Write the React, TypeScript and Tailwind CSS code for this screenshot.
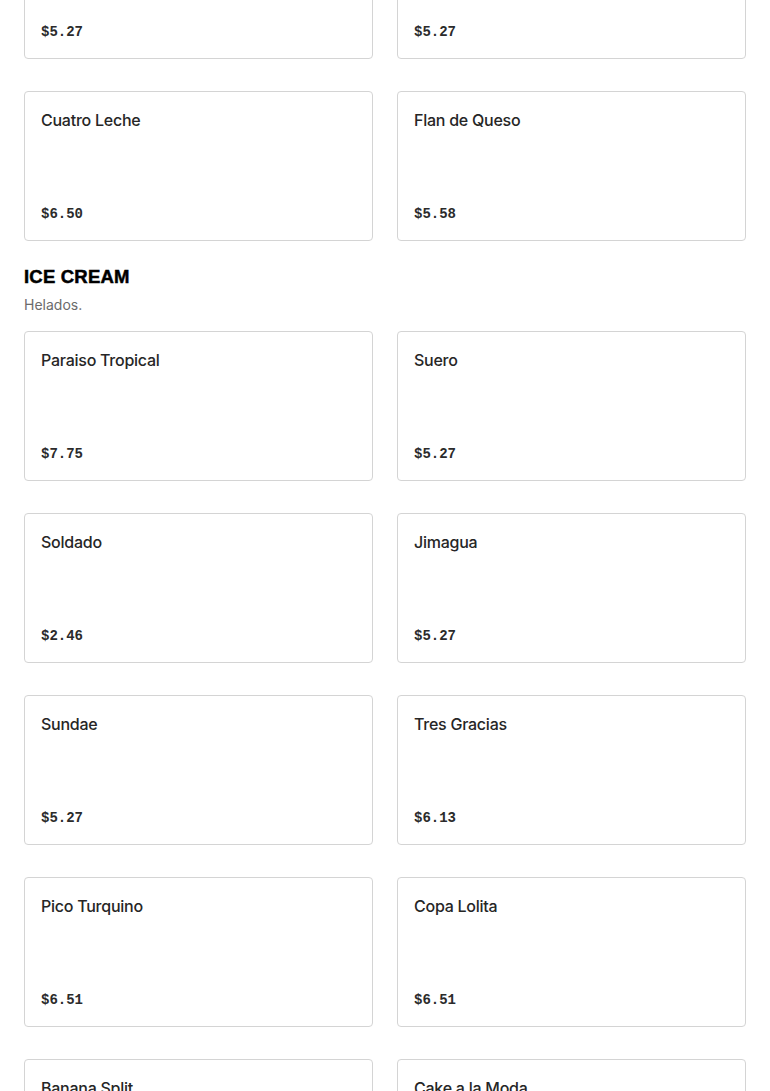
const rows: [string, string][][] = [
  [
    ["Tres Leches", "$5.27"],
    ["Flan", "$5.27"],
  ],
  [
    ["Cuatro Leche", "$6.50"],
    ["Flan de Queso", "$5.58"],
  ],
];

const iceCream: [string, string][][] = [
  [
    ["Paraiso Tropical", "$7.75"],
    ["Suero", "$5.27"],
  ],
  [
    ["Soldado", "$2.46"],
    ["Jimagua", "$5.27"],
  ],
  [
    ["Sundae", "$5.27"],
    ["Tres Gracias", "$6.13"],
  ],
  [
    ["Pico Turquino", "$6.51"],
    ["Copa Lolita", "$6.51"],
  ],
  [
    ["Banana Split", "$6.51"],
    ["Cake a la Moda", "$6.51"],
  ],
];

function ItemCard({ name, price }: { name: string; price: string }) {
  return (
    <div className="flex h-[150px] flex-col rounded-[4px] border border-[#d4d4d4] bg-white p-4">
      <h3 className="font-['Inter','Liberation_Sans',sans-serif] text-base leading-6 font-medium tracking-[-0.25px] text-[#262626]">
        {name}
      </h3>
      <div className="flex-1" />
      <div className="font-['Liberation_Mono',monospace] text-sm leading-5 font-bold text-[#2b2b2b]">
        {price}
      </div>
    </div>
  );
}

function Grid({ items }: { items: [string, string][][] }) {
  return (
    <div className="flex flex-col gap-8">
      {items.map((row, i) => (
        <div key={i} className="grid grid-cols-2 gap-6">
          {row.map(([name, price]) => (
            <ItemCard key={name} name={name} price={price} />
          ))}
        </div>
      ))}
    </div>
  );
}

export default function App() {
  return (
    <div className="h-[1091px] overflow-hidden bg-white">
      <div className="mt-[-91px] px-6">
        <Grid items={rows} />

        <section className="mt-6">
          <h2 className="font-['Liberation_Sans',sans-serif] text-[18.5px] leading-6 font-extrabold tracking-[0.2px] text-black [-webkit-text-stroke:0.5px_black]">
            ICE CREAM
          </h2>
          <p className="mt-[6px] font-['Inter','Liberation_Sans',sans-serif] text-sm leading-5 text-[#6b6b6b]">
            Helados.
          </p>
          <div className="mt-4">
            <Grid items={iceCream} />
          </div>
        </section>
      </div>
    </div>
  );
}
